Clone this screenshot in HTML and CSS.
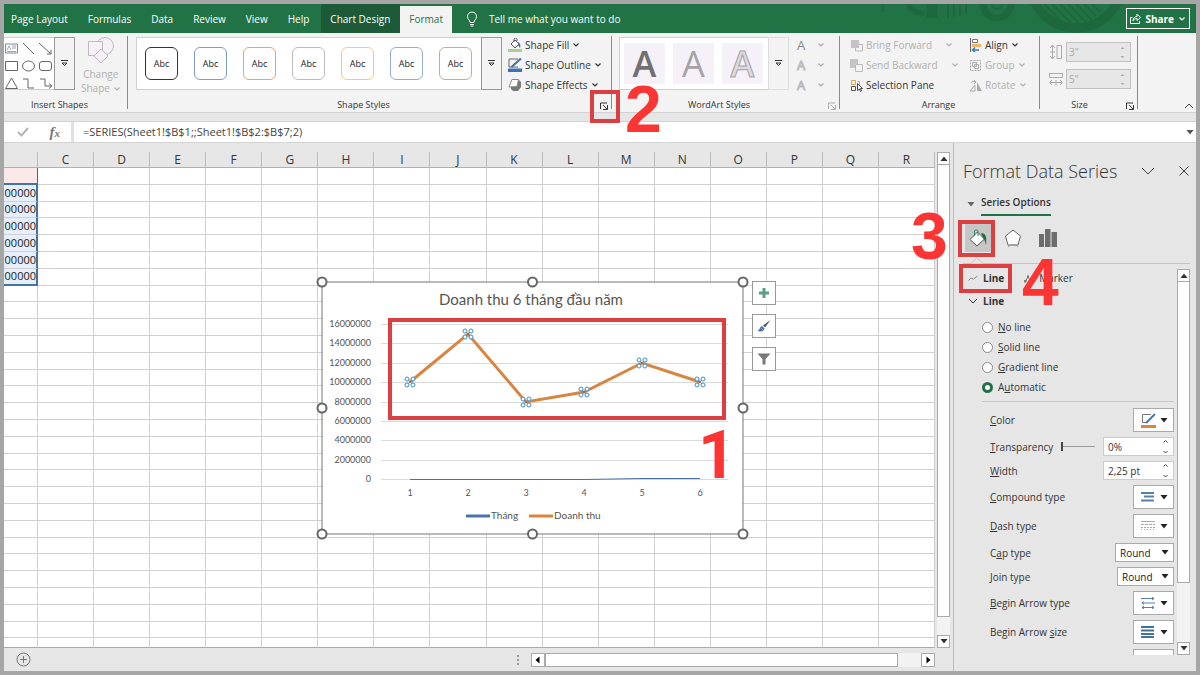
FILE: index.html
```
<!DOCTYPE html>
<html lang="en">
<head>
    <meta charset="UTF-8">
    <title>Format Data Series</title>
    <link rel="stylesheet" href="styles.css">
</head>
<body>
<!-- shared symbols -->
<svg class="defs" aria-hidden="true">
    <symbol id="chev" viewBox="0 0 8 6"><path d="M1.500 1.500 4 4l2.500-2.500" fill="none" stroke="currentColor" stroke-width="1.200"/></symbol>
    <symbol id="more" viewBox="0 0 9 9"><path d="M1 1.500h7M2 4l2.500 2.500L7 4z" fill="none" stroke="currentColor"/></symbol>
    <symbol id="launch" viewBox="0 0 9 9"><path d="M.5 7V1H7M3 3l4 4M7.500 3v4.500H3" fill="none" stroke="currentColor"/></symbol>
    <symbol id="tri" viewBox="0 0 8 5"><path d="M.5 0h7L4 4.500z" fill="currentColor"/></symbol>
</svg>
<div class="app">
    <header class="tabbar">
        <nav class="tabs">
            <a href="#">Page Layout</a>
            <a href="#">Formulas</a>
            <a href="#">Data</a>
            <a href="#">Review</a>
            <a href="#">View</a>
            <a href="#">Help</a>
        </nav>
        <a href="#" class="tab-context">Chart Design</a>
        <a href="#" class="tab-active">Format</a>
        <a href="#" class="tell-me">
            <svg width="12" height="16" viewBox="0 0 12 16" fill="none" stroke="#fff"><path d="M4 11.500C4 9 1.500 8.500 1.500 5.500a4.500 4.500 0 0 1 9 0C10.500 8.500 8 9 8 11.500zM4 13.500h4M4.500 15h3"/></svg>
            Tell me what you want to do
        </a>
        <svg class="deco" width="330" height="29" viewBox="0 0 330 29" fill="none" stroke="#1e683e">
            <path d="M11 0v8M76 0v14M82 0v13M88 0v12M94 0v10" stroke-width="2"/>
            <path d="M60 0v14" stroke-width="11"/>
            <path d="M36 0a15 15 0 0 0 16 9" stroke-width="5"/>
            <circle cx="125" cy="0" r="14" stroke-width="7"/>
            <circle cx="125" cy="0" r="5" stroke-width="2"/>
            <circle cx="204" cy="-22" r="46" stroke-width="9"/>
            <path d="M172 0l22 22M180 0l20 20M188 0l20 20M196 0l18 18M204 0l16 16M212 0l12 12M220 0l8 8" stroke-width="2"/>
        </svg>
        <button class="share">
            <svg width="11" height="11" viewBox="0 0 11 11" fill="none" stroke="#fff"><path d="M2.500 4.500h-2v6h9V8M3 8c0-3 2-4.500 4-4.500V1l3.500 3.500L7 7.500V5.500C5 5.500 4 6.500 3 8z"/></svg>
            Share
            <svg width="8" height="6"><use href="#chev"/></svg>
        </button>
    </header>

    <div class="ribbon">
        <section class="group g-insert">
            <div class="group-body">
                <div class="gallery shapes">
                    <svg width="50" height="52" viewBox="0 0 50 52" fill="none" stroke="#666">
                        <path d="M1.500 6h12v9h-12z" stroke="#888"/><path d="M3 12l2-4 2 4M8 8h4M8 10h4M3 13.500h9" stroke="#7d8fa8" stroke-width=".8"/>
                        <path d="M19 5l11 11M35 5l12 11M47 12v4h-4M1.500 23.500h12v9h-12zM7.500 40l-6 10.500h12zM19 41h5v9h6M36 41h5v7h6M45 45.500l3 2.500-3 2.500"/>
                        <ellipse cx="24.500" cy="28" rx="6" ry="5"/>
                        <rect x="35.500" y="23.500" width="12" height="9" rx="2.500"/>
                    </svg>
                </div>
                <button class="more"><svg width="9" height="9"><use href="#more"/></svg></button>
                <button class="change" disabled>
                    <svg width="28" height="27" viewBox="0 0 28 27" fill="#f6f0f7" stroke="#bfb8c2"><circle cx="18" cy="9" r="8.500"/><path d="M1.500 4.500h14v14h-14z"/><path d="M14 12l7 7-7 7-7-7z"/></svg>
                    <span>Change<br>Shape <svg width="8" height="6"><use href="#chev"/></svg></span>
                </button>
            </div>
            <div class="group-label">Insert Shapes</div>
        </section>

        <section class="group g-styles">
            <div class="group-body">
                <div class="gallery swatches">
                    <button class="sw sw-black">Abc</button>
                    <button class="sw sw-blue">Abc</button>
                    <button class="sw sw-orange">Abc</button>
                    <button class="sw sw-gray">Abc</button>
                    <button class="sw sw-gold">Abc</button>
                    <button class="sw sw-sky">Abc</button>
                    <button class="sw sw-green">Abc</button>
                </div>
                <button class="more"><svg width="9" height="9"><use href="#more"/></svg></button>
                <div class="menu">
                    <button><svg width="14" height="14" viewBox="0 0 14 14"><path d="M0 11h14v3H0z" fill="#a9cf8e"/><path d="M3 6l4-4 4 4-4 4z" fill="#fff" stroke="#555"/><path d="M6 4V1.500a1.500 1.500 0 0 1 3 0V3" fill="none" stroke="#555"/><path d="M10 4c2 1 3 3 2 6l-2-3z" fill="#41719c"/></svg>Shape Fill<svg width="8" height="6"><use href="#chev"/></svg></button>
                    <button><svg width="14" height="14" viewBox="0 0 14 14"><path d="M0 10.500h14V14H0z" fill="#3f6fb5"/><path d="M10 1H1v8h9" fill="none" stroke="#666"/><path d="M3.500 9L13 .5" stroke="#41719c" stroke-width="2"/></svg>Shape Outline<svg width="8" height="6"><use href="#chev"/></svg></button>
                    <button><svg width="14" height="14" viewBox="0 0 14 14"><path d="M3 8v3l2 2h5l3-4V4l-2-2z" fill="#777"/><path d="M4 1.500h6.500L9 8.500 1 9z" fill="#fff" stroke="#888"/></svg>Shape Effects<svg width="8" height="6"><use href="#chev"/></svg></button>
                </div>
            </div>
            <div class="group-label">Shape Styles</div>
            <button class="launcher"><svg width="9" height="9"><use href="#launch"/></svg></button>
            <span class="frame frame-2"></span>
            <span class="num num-2">2</span>
        </section>

        <section class="group g-wordart">
            <div class="group-body">
                <div class="gallery wordart">
                    <button class="wa wa-dark">A</button>
                    <button class="wa wa-light">A</button>
                    <button class="wa wa-line">A</button>
                </div>
                <button class="more more-soft"><svg width="9" height="9"><use href="#more"/></svg></button>
                <div class="menu menu-a">
                    <button class="solid" disabled>A<svg width="8" height="6"><use href="#chev"/></svg></button>
                    <button class="hollow" disabled>A<svg width="8" height="6"><use href="#chev"/></svg></button>
                    <button class="hollow" disabled>A<svg width="8" height="6"><use href="#chev"/></svg></button>
                </div>
            </div>
            <div class="group-label">WordArt Styles</div>
            <button class="launcher" disabled><svg width="9" height="9"><use href="#launch"/></svg></button>
        </section>

        <section class="group g-arrange">
            <div class="group-body">
                <div class="menu menu-order">
                    <button disabled><svg width="13" height="13" viewBox="0 0 13 13"><path d="M1 1h8v8H1z" fill="#c6c3c8"/><path d="M5.500 9v3h7V5.500H9" fill="none" stroke="#bbb"/></svg>Bring Forward<svg class="push" width="8" height="6"><use href="#chev"/></svg></button>
                    <button disabled><svg width="13" height="13" viewBox="0 0 13 13"><path d="M0 0h8v5H5v4H0z" fill="#c6c3c8"/><path d="M5.500 5.500h7v7h-7z" fill="none" stroke="#bbb"/></svg>Send Backward<svg class="push" width="8" height="6"><use href="#chev"/></svg></button>
                    <button><svg width="13" height="13" viewBox="0 0 13 13" fill="none"><path d="M1.500 1.500h4v4h-4zM7.500 2.500h2v3" stroke="#d9a441"/><path d="M1.500 7.500h4v4h-4z" stroke="#555"/><path d="M7.500 4.500v7l2-1.500 1 2.500 1-.5-1-2.500h2z" fill="#fff" stroke="#444"/></svg>Selection Pane</button>
                </div>
                <div class="menu">
                    <button><svg width="13" height="14" viewBox="0 0 13 14"><path d="M1.500 0v14" stroke="#666"/><path d="M3.500 1.500h5v3h-5z" fill="#fff" stroke="#777"/><path d="M3 6h9v3H3z" fill="#f0b26c"/><path d="M3 12h7M6 9.500L3.500 12 6 14" fill="none" stroke="#3d7ab8" stroke-width="1.500"/></svg>Align<svg width="8" height="6"><use href="#chev"/></svg></button>
                    <button disabled><svg width="13" height="13" viewBox="0 0 13 13" fill="none" stroke="#aaa"><path d="M1.500 1.500h10v10h-10z" stroke-dasharray="2 1"/><path d="M3.500 3.500h4v4h-4zM5.500 5.500h4v4h-4z"/></svg>Group<svg width="8" height="6"><use href="#chev"/></svg></button>
                    <button disabled><svg width="13" height="13" viewBox="0 0 13 13"><path d="M8 3v9h5z" fill="#aaa"/><path d="M6 6v6H1zM2 4c1-2 3-2 5-1M5 1l2 2-2 2" fill="none" stroke="#aaa"/></svg>Rotate<svg width="8" height="6"><use href="#chev"/></svg></button>
                </div>
            </div>
            <div class="group-label">Arrange</div>
        </section>

        <section class="group g-size">
            <div class="group-body sizes">
                <label>
                    <svg width="14" height="16" viewBox="0 0 14 16" fill="none" stroke="#aaa"><path d="M3.500 1v14M1 4l2.500-3L6 4M1 12l2.500 3L6 12M1 8h5M8 1.500h4.500v13H8z"/></svg>
                    <span class="spin spin-off"><input type="text" value='3"' disabled><svg width="7" height="15" viewBox="0 0 7 15"><path d="M1.500 4l2-2 2 2zM1.500 11l2 2 2-2z" fill="#aaa"/></svg></span>
                </label>
                <label>
                    <svg width="14" height="16" viewBox="0 0 14 16" fill="none" stroke="#aaa"><path d="M.5 2.500h13v4H.5zM1 11.500h12M3 9l-2.500 2.500L3 14M11 9l2.500 2.500L11 14M7 9v5"/></svg>
                    <span class="spin spin-off"><input type="text" value='5"' disabled><svg width="7" height="15" viewBox="0 0 7 15"><path d="M1.500 4l2-2 2 2zM1.500 11l2 2 2-2z" fill="#aaa"/></svg></span>
                </label>
            </div>
            <div class="group-label">Size</div>
            <button class="launcher"><svg width="9" height="9"><use href="#launch"/></svg></button>
        </section>
        <button class="collapse"><svg width="10" height="6" viewBox="0 0 10 6"><path d="M1 5l4-4 4 4" fill="none" stroke="#444"/></svg></button>
    </div>

    <div class="formula">
        <div class="formula-tools">
            <svg width="12" height="10" viewBox="0 0 12 10"><path d="M1 5l3.500 3.500L11 1" fill="none" stroke="#b5b5b5" stroke-width="2"/></svg>
            <span class="fx">f<small>x</small></span>
        </div>
        <input class="formula-text" type="text" aria-label="Formula" value="=SERIES(Sheet1!$B$1;;Sheet1!$B$2:$B$7;2)">
        <svg class="formula-drop" width="8" height="5"><use href="#tri"/></svg>
    </div>

    <main class="work">
        <div class="book">
            <div class="sheet-row">
                <div class="sheet">
                    <table class="grid">
                        <thead>
                            <tr><th class="col-b"></th><th>C</th><th>D</th><th>E</th><th>F</th><th>G</th><th>H</th><th>I</th><th>J</th><th>K</th><th>L</th><th>M</th><th>N</th><th>O</th><th>P</th><th>Q</th><th>R</th></tr>
                        </thead>
                        <tbody id="rows"></tbody>
                    </table>

                    <div class="chart">
                        <svg width="437" height="268" viewBox="-8 -8 437 268">
                            <rect x="0" y="0" width="421" height="252" fill="#fff" stroke="#777"/>
                            <text class="c-title" x="209" y="23">Doanh thu 6 tháng đầu năm</text>
                            <path d="M59 42.500h347M59 61.500h347M59 81.500h347M59 100.500h347M59 120.500h347M59 139.500h347M59 158.500h347M59 178.500h347M59 197.500h347" stroke="#d9d9d9"/>
                            <g class="c-y">
                                <text x="49" y="45">16000000</text>
                                <text x="49" y="64">14000000</text>
                                <text x="49" y="84">12000000</text>
                                <text x="49" y="103">10000000</text>
                                <text x="49" y="123">8000000</text>
                                <text x="49" y="142">6000000</text>
                                <text x="49" y="161">4000000</text>
                                <text x="49" y="181">2000000</text>
                                <text x="49" y="200">0</text>
                            </g>
                            <g class="c-x">
                                <text x="88" y="214">1</text>
                                <text x="146" y="214">2</text>
                                <text x="204" y="214">3</text>
                                <text x="262" y="214">4</text>
                                <text x="320" y="214">5</text>
                                <text x="378" y="214">6</text>
                            </g>
                            <path d="M88 197.500L262 197.500 320 196.500H378" fill="none" stroke="#4a6fae" stroke-width="1"/>
                            <path d="M88 100L146 52 204 120 262 110 320 81 378 100" fill="none" stroke="#d9853f" stroke-width="3"/>
                            <g id="marks"></g>
                            <path d="M144 234h24" stroke="#4a72b0" stroke-width="3"/>
                            <text x="169" y="237">Tháng</text>
                            <path d="M207 234h24" stroke="#d9853f" stroke-width="3"/>
                            <text x="232" y="237">Doanh thu</text>
                            <g fill="#fff" stroke="#666" stroke-width="2">
                                <circle cx="0" cy="0" r="4.500"/><circle cx="210.500" cy="0" r="4.500"/><circle cx="421" cy="0" r="4.500"/>
                                <circle cx="0" cy="126" r="4.500"/><circle cx="421" cy="126" r="4.500"/>
                                <circle cx="0" cy="252" r="4.500"/><circle cx="210.500" cy="252" r="4.500"/><circle cx="421" cy="252" r="4.500"/>
                            </g>
                            <rect x="68" y="38" width="334" height="98" fill="none" stroke="#db3f42" stroke-width="4"/>
                            <text class="c-num" x="376" y="196">1</text>
                        </svg>
                        <div class="chart-tools">
                            <button><svg width="12" height="12" viewBox="0 0 12 12"><path d="M6 1v10M1 6h10" stroke="#5b9f82" stroke-width="3"/></svg></button>
                            <button><svg width="14" height="14" viewBox="0 0 14 14"><path d="M13.500 1L8 8.500 6 6.500z" fill="#555"/><path d="M5 7l2.500 2.500C7 12 4 13 .5 12 3 11 2.500 8 5 7z" fill="#41719c"/><path d="M4.500 9.500l1 1" stroke="#fff"/></svg></button>
                            <button><svg width="14" height="12" viewBox="0 0 14 12"><path d="M.5.5h13L8.500 6v5.500h-3V6z" fill="#777"/></svg></button>
                        </div>
                    </div>
                </div>
                <div class="vscroll">
                    <button><svg class="up" width="8" height="5"><use href="#tri"/></svg></button>
                    <div class="thumb"></div>
                    <button><svg width="8" height="5"><use href="#tri"/></svg></button>
                </div>
            </div>
            <footer class="sheetbar">
                <button class="add"><svg width="15" height="15" viewBox="0 0 15 15" fill="none" stroke="#777"><circle cx="7.500" cy="7.500" r="6.500"/><path d="M7.500 4v7M4 7.500h7"/></svg></button>
                <span class="dots"></span>
                <div class="hscroll">
                    <button><svg width="5" height="8" viewBox="0 0 5 8"><path d="M4.500.5v7L.5 4z"/></svg></button>
                    <div class="hthumb"></div>
                    <button><svg width="5" height="8" viewBox="0 0 5 8"><path d="M.5.5v7l4-3.500z"/></svg></button>
                </div>
            </footer>
        </div>

        <aside class="pane">
            <div class="pane-head">
                <h2>Format Data Series</h2>
                <button><svg width="14" height="8" viewBox="0 0 14 8"><path d="M1 1l6 6 6-6" fill="none" stroke="#444"/></svg></button>
                <button><svg width="10" height="10" viewBox="0 0 10 10"><path d="M.5.5l9 9M9.500.5l-9 9" fill="none" stroke="#444"/></svg></button>
            </div>
            <div class="pane-options">
                <svg width="8" height="5"><use href="#tri"/></svg>
                <a href="#">Series Options</a>
            </div>
            <div class="pane-icons">
                <button class="on"><svg width="20" height="20" viewBox="0 0 20 20"><path d="M2 11.500L9.500 4l7 7L9 18z" fill="#fff" stroke="#555"/><path d="M6.500 8V3a2 2 0 0 1 3.500 0v5" fill="none" stroke="#2f8a5f"/><path d="M13 5c5 0 6 4 5 12-1-3-1-5-3-7z" fill="#217346"/></svg></button>
                <button><svg width="18" height="19" viewBox="0 0 18 19"><path d="M9 1l7.500 6-2.500 9H4L1.500 7z" fill="#fff" stroke="#666"/><path d="M4 18c1-3 9-3 10 0" fill="none" stroke="#999"/></svg></button>
                <button><svg width="18" height="18" viewBox="0 0 18 18"><path d="M0 5h5v13H0zM6 0h5.500v18H6zM12.500 3H18v15h-5.500z" fill="#6d6d6d"/></svg></button>
                <svg class="notch" width="12" height="7" viewBox="0 0 12 7"><path d="M0 6.500L6 .7l6 5.800" fill="#e6e6e6" stroke="#c4c4c4"/></svg>
            </div>
            <div class="pane-scroll">
                <div class="pane-body">
                    <div class="pane-tabs">
                        <button class="sel"><svg width="10" height="7" viewBox="0 0 10 7"><path d="M.5 5.500L3 3l2.500 1L9.500 1" fill="none" stroke="#888"/></svg>Line</button>
                        <button><svg width="10" height="9" viewBox="0 0 10 9"><path d="M1.500 7L4 3l2 3 3-4" fill="none" stroke="#777"/><path d="M0 6h2.500v2.500H0zM3 1.500h2V4H3z" fill="#777"/></svg>Marker</button>
                    </div>
                    <div class="sect"><svg width="10" height="6" viewBox="0 0 10 6"><path d="M1 1l4 4 4-4" fill="none" stroke="#333"/></svg>Line</div>
                    <div class="radios">
                        <label><input type="radio" name="line"><span><u>N</u>o line</span></label>
                        <label><input type="radio" name="line"><span><u>S</u>olid line</span></label>
                        <label><input type="radio" name="line"><span><u>G</u>radient line</span></label>
                        <label><input type="radio" name="line" checked><span>A<u>u</u>tomatic</span></label>
                    </div>
                    <div class="props">
                        <div class="prop">
                            <label for="color"><u>C</u>olor</label>
                            <button id="color" class="drop"><svg width="16" height="15" viewBox="0 0 16 15"><path d="M0 12h15v3H0z" fill="#d9843f"/><path d="M10 1.500H1.500v8H6" fill="none" stroke="#777"/><path d="M5 10L14 1" stroke="#3d7ab8" stroke-width="2"/></svg><svg width="8" height="5"><use href="#tri"/></svg></button>
                        </div>
                        <div class="prop">
                            <label for="transp"><u>T</u>ransparency</label>
                            <input type="range" class="slider" aria-label="Transparency slider" value="0">
                            <span class="spin"><input id="transp" type="text" value="0%"><svg width="7" height="15" viewBox="0 0 7 15"><path d="M1.500 3.500l2-2 2 2M1.500 12l2 2 2-2" fill="none" stroke="#444"/></svg></span>
                        </div>
                        <div class="prop">
                            <label for="width"><u>W</u>idth</label>
                            <span class="spin"><input id="width" type="text" value="2,25 pt"><svg width="7" height="15" viewBox="0 0 7 15"><path d="M1.500 3.500l2-2 2 2M1.500 12l2 2 2-2" fill="none" stroke="#444"/></svg></span>
                        </div>
                        <div class="prop">
                            <label for="compound"><u>C</u>ompound type</label>
                            <button id="compound" class="drop"><svg width="14" height="12" viewBox="0 0 14 12"><path d="M0 2h13M3 5.500h10M0 9.500h13" stroke="#5581a8" stroke-width="2"/></svg><svg width="8" height="5"><use href="#tri"/></svg></button>
                        </div>
                        <div class="prop">
                            <label for="dash"><u>D</u>ash type</label>
                            <button id="dash" class="drop"><svg width="14" height="12" viewBox="0 0 14 12" stroke="#aaa"><path d="M0 1.500h14"/><path d="M0 4.500h14" stroke-dasharray="3 1"/><path d="M0 7.500h14" stroke-dasharray="2 1"/><path d="M0 9.500h14" stroke-dasharray="1 2"/></svg><svg width="8" height="5"><use href="#tri"/></svg></button>
                        </div>
                        <div class="prop">
                            <label for="cap">C<u>a</u>p type</label>
                            <span class="pick"><select id="cap"><option>Round</option></select><svg width="8" height="5"><use href="#tri"/></svg></span>
                        </div>
                        <div class="prop">
                            <label for="join"><u>J</u>oin type</label>
                            <span class="pick pick-join"><select id="join"><option>Round</option></select><svg width="8" height="5"><use href="#tri"/></svg></span>
                        </div>
                        <div class="prop">
                            <label for="btype"><u>B</u>egin Arrow type</label>
                            <button id="btype" class="drop"><svg width="14" height="12" viewBox="0 0 14 12" fill="none" stroke="#5581a8"><path d="M0 1.500h13M11 0l2 1.500L11 3M1 6h13M3 4.500L1 6l2 1.500M1 10.500h12M3 9l-2 1.500L3 12M11 9l2 1.500-2 1.500"/></svg><svg width="8" height="5"><use href="#tri"/></svg></button>
                        </div>
                        <div class="prop">
                            <label for="bsize">Begin Arrow <u>s</u>ize</label>
                            <button id="bsize" class="drop"><svg width="14" height="12" viewBox="0 0 14 12"><path d="M0 1h13M0 4.500h13M0 8h13M0 11h13" stroke="#41719c" stroke-width="1.800"/></svg><svg width="8" height="5"><use href="#tri"/></svg></button>
                        </div>
                        <div class="prop">
                            <span></span>
                            <button class="drop" aria-label="End Arrow type"><svg width="14" height="12" viewBox="0 0 14 12" fill="none" stroke="#5581a8"><path d="M0 1.500h13M11 0l2 1.500L11 3"/></svg><svg width="8" height="5"><use href="#tri"/></svg></button>
                        </div>
                    </div>
                </div>
                <div class="vscroll pane-bar">
                    <button><svg class="up" width="8" height="5"><use href="#tri"/></svg></button>
                    <div class="thumb"></div>
                    <button><svg width="8" height="5"><use href="#tri"/></svg></button>
                </div>
            </div>
            <span class="frame frame-3"></span>
            <span class="num num-3">3</span>
            <span class="frame frame-4"></span>
            <span class="num num-4">4</span>
        </aside>
    </main>
</div>
<script src="sheet.js"></script>
</body>
</html>
```
FILE: styles.css
```
*{
    box-sizing: border-box;
}
body{
    margin: 0;
    padding: 4px;
    height: 100vh;
    background-color: #a6a6a6;
    color: #333;
    font: 10px/14px "Open Sans", "Noto Sans", sans-serif;
}
button, input, select{
    margin: 0;
    padding: 0;
    border: 0;
    background: none;
    color: inherit;
    font: inherit;
}
a{
    color: inherit;
    text-decoration: none;
}
svg{
    display: block;
    flex: none;
}
.defs{
    position: absolute;
    width: 0;
    height: 0;
}
.app{
    display: flex;
    flex-direction: column;
    height: 100%;
    overflow: hidden;
    background-color: #e6e6e6;
}

/* tab bar */
.tabbar{
    display: flex;
    align-items: stretch;
    height: 29px;
    flex: none;
    padding-right: 6px;
    background-color: #217346;
    color: #fff;
    line-height: 30px;
    white-space: nowrap;
}
.tabs{
    display: flex;
    gap: 20px;
    padding: 0 12px 0 7px;
}
.tab-context{
    padding: 0 10px 0 9px;
    background-color: #1c5a38;
}
.tab-active{
    margin-top: 2px;
    padding: 0 9px;
    background-color: #f3f3f3;
    color: #217346;
    line-height: 27px;
}
.tell-me{
    display: flex;
    align-items: center;
    gap: 11px;
    padding-left: 14px;
}
.deco{
    margin-left: auto;
    margin-right: -76px;
}
.share{
    display: flex;
    align-items: center;
    gap: 4px;
    position: relative;
    height: 21px;
    align-self: center;
    padding: 0 3px;
    border: 1px solid #fff;
    background-color: #217346;
    font-weight: 700;
}

/* ribbon */
.ribbon{
    display: flex;
    flex: none;
    height: 80px;
    padding: 3px 0;
    background-color: #f3f3f3;
    border-bottom: 1px solid #d2d2d2;
    position: relative;
    z-index: 2;
}
.group{
    display: flex;
    flex-direction: column;
    justify-content: space-between;
    position: relative;
    border-right: 1px solid #8a8a8a;
}
.group-body{
    display: flex;
    height: 54px;
    padding-top: 1px;
}
.group-label{
    padding-right: 20px;
    font-size: 9px;
    line-height: 8px;
    text-align: center;
    white-space: nowrap;
}
.gallery{
    display: flex;
    align-items: center;
    background-color: #fff;
    border: 1px solid #d0d0d0;
    border-right: 0;
}
.shapes{
    border-left: 0;
}
.more{
    display: flex;
    align-items: center;
    justify-content: center;
    width: 21px;
    border: 1px solid #999;
}
.more-soft{
    border-color: #ddd;
}
.launcher{
    position: absolute;
    right: 2px;
    bottom: -2px;
}
button:disabled{
    color: #b0b0b0;
}
.g-insert{
    width: 124px;
}
.g-insert .group-label,
.g-arrange .group-label{
    padding-right: 12px;
}
.change{
    display: flex;
    flex-direction: column;
    align-items: center;
    gap: 3px;
    margin-left: 6px;
    line-height: 14px;
}
.change span svg{
    display: inline-block;
}
.g-styles{
    width: 484px;
    padding-left: 8px;
    z-index: 1;
}
.swatches{
    gap: 16px;
    padding: 0 9px 0 8px;
}
.sw{
    width: 33px;
    height: 33px;
    border: 1px solid #333;
    border-radius: 6px;
    font-size: 9px;
    color: #222;
}
.sw-blue{ border-color: #7f9cc9; }
.sw-orange{ border-color: #dfa57e; }
.sw-gray{ border-color: #bbb; }
.sw-gold{ border-color: #ecd077; }
.sw-sky{ border-color: #8fb0d0; }
.sw-green{ border-color: #9cc585; }
.menu{
    display: flex;
    flex-direction: column;
    padding-left: 6px;
    margin-top: -2px;
}
.menu button{
    display: flex;
    align-items: center;
    gap: 3px;
    height: 20px;
    flex: none;
    white-space: nowrap;
}
.g-wordart{
    width: 228px;
    padding-left: 7px;
}
.wordart{
    gap: 8px;
    padding: 0 5px 0 4px;
}
.wa{
    width: 41px;
    height: 41px;
    background-color: #f6f1f8;
    font-size: 36px;
    line-height: 41px;
    font-weight: 600;
    color: #707070;
}
.wa-light{
    color: #a5a3a8;
    font-weight: 400;
}
.wa-line{
    color: #dcdadf;
    -webkit-text-stroke: 1px #a5a3a8;
}
.menu-a{
    padding-left: 8px;
}
.menu-a button{
    gap: 12px;
    font-size: 13px;
}
.menu-a .solid{
    color: #888;
}
.menu-a .hollow{
    color: #f3f3f3;
    -webkit-text-stroke: 1px #bbb;
}
.menu-a svg{
    color: #aaa;
}
.g-arrange{
    width: 200px;
    padding-left: 10px;
}
.menu-order{
    width: 108px;
    padding-left: 0;
}
.menu-order + .menu{
    padding-left: 11px;
}
.push{
    margin-left: 10px;
}
.g-size{
    width: 98px;
    padding: 0 7px 0 9px;
}
.sizes{
    flex-direction: column;
    gap: 7px;
    padding-top: 6px;
}
.sizes label{
    display: flex;
    align-items: center;
    gap: 3px;
}
.spin{
    display: flex;
    align-items: center;
    width: 71px;
    height: 19px;
    padding-right: 4px;
    background-color: #fff;
    border: 1px solid #ccc;
}
.spin input{
    flex: 1;
    min-width: 0;
    padding-left: 4px;
}
.spin-off{
    width: 65px;
    height: 20px;
    background-color: #e6e6e6;
    border-color: #c0c0c0;
    color: #aaa;
}
.spin-off input{
    padding-left: 2px;
}
.collapse{
    align-self: flex-end;
    margin-left: auto;
    padding: 0 2px 0 0;
}

/* formula bar */
.formula{
    display: flex;
    align-items: stretch;
    flex: none;
    height: 22px;
    margin-top: 8px;
    border: 1px solid #d4d4d4;
    border-width: 1px 0;
    background-color: #fff;
}
.formula-tools{
    display: flex;
    align-items: center;
    justify-content: space-between;
    width: 70px;
    padding: 0 11px 0 13px;
    border-right: 3px solid #e0e0e0;
}
.fx{
    font: italic bold 15px/18px "Liberation Serif", serif;
    color: #777;
}
.fx small{
    font-size: 11px;
}
.formula-text{
    flex: 1;
    padding-left: 9px;
    color: #444;
    font-size: 11px;
}
.formula-drop{
    align-self: center;
    margin-right: 2px;
    color: #555;
}

/* sheet */
.work{
    display: flex;
    flex: 1;
    min-height: 0;
}
.book{
    display: flex;
    flex-direction: column;
    flex: 1;
    min-width: 0;
    border-right: 1px solid #bbb;
}
.sheet-row{
    display: flex;
    flex: 1;
    min-height: 0;
}
.sheet{
    flex: 1;
    min-width: 0;
    position: relative;
    padding-top: 9px;
}
.grid{
    width: 100%;
    height: 100%;
    table-layout: fixed;
    border-collapse: separate;
    border-spacing: 0;
    background-color: #fff;
    font-size: 11px;
    line-height: 12px;
}
.grid th{
    height: 16px;
    padding: 0;
    background-color: #e6e6e6;
    border-right: 1px solid #bbb;
    border-bottom: 1px solid #b0b0b0;
    font-size: 12px;
    line-height: 15px;
    font-weight: 400;
}
.grid .col-b{
    width: 34px;
}
.grid td{
    height: 16px;
    padding: 0;
    border-right: 1px solid #d0d0d0;
    border-bottom: 1px solid #d0d0d0;
}
.grid .name{
    background-color: #fbe8e8;
    border-right-color: #b5383c;
    border-bottom: 2px solid #4472a8;
}
.grid .value{
    background-color: #e5eef9;
    border-right: 2px solid #4472a8;
    text-align: right;
    color: #222;
}
.grid .value-last{
    border-bottom: 2px solid #4472a8;
}
.grid .cut td{
    height: 9px;
    border-bottom-color: #aaa;
}

/* scroll bars */
.vscroll{
    display: flex;
    flex-direction: column;
    width: 13px;
    margin: 9px 3px 0 2px;
    background-color: #f2f2f2;
}
.vscroll button{
    display: flex;
    align-items: center;
    justify-content: center;
    height: 13px;
    background-color: #fff;
    border: 1px solid #aaa;
}
.up{
    transform: rotate(180deg);
}
.thumb{
    flex: 1;
    margin-bottom: 18px;
    background-color: #fff;
    border: 1px solid #aaa;
    border-top: 0;
}
.sheetbar{
    display: flex;
    align-items: center;
    height: 23px;
    flex: none;
    padding: 0 18px 0 12px;
}
.dots{
    width: 3px;
    height: 10px;
    margin-left: auto;
    border-left: 2px dotted #999;
}
.hscroll{
    display: flex;
    width: 44%;
    height: 14px;
    margin-left: 11px;
    background-color: #f2f2f2;
}
.hscroll button{
    display: flex;
    align-items: center;
    justify-content: center;
    width: 14px;
    border: 1px solid #aaa;
    background-color: #fff;
}
.hthumb{
    flex: 1;
    margin-right: 23px;
    background-color: #fff;
    border: 1px solid #aaa;
}

/* chart object */
.chart{
    position: absolute;
    left: 310px;
    top: 131px;
    display: flex;
    gap: 1px;
}
.chart text{
    font: 10px Lato, "Open Sans", sans-serif;
    fill: #555;
}
.chart .c-title{
    font-size: 15px;
    text-anchor: middle;
}
.chart .c-y text{
    font-size: 9px;
    text-anchor: end;
}
.chart .c-x text{
    font-size: 9px;
    text-anchor: middle;
}
.chart .c-num{
    font: bold 66px Roboto, sans-serif;
    fill: #fb3434;
}
.chart-tools{
    display: flex;
    flex-direction: column;
    gap: 9px;
    padding-top: 7px;
}
.chart-tools button{
    display: flex;
    align-items: center;
    justify-content: center;
    width: 24px;
    height: 24px;
    border: 1px solid #999;
    background-color: #fff;
}

/* format pane */
.pane{
    display: flex;
    flex-direction: column;
    width: 242px;
    padding: 16px 6px 16px 9px;
    position: relative;
}
.pane-head{
    display: flex;
    align-items: center;
    gap: 24px;
    height: 24px;
    padding-right: 3px;
}
.pane-head h2{
    flex: 1;
    margin: 0;
    font-size: 18px;
    line-height: 24px;
    font-weight: 300;
    color: #333;
    white-space: nowrap;
}
.pane-options{
    display: flex;
    align-items: center;
    gap: 6px;
    padding: 10px 0 0 4px;
    color: #666;
}
.pane-options a{
    padding: 2px 0 5px;
    border-bottom: 2px solid #217346;
    color: #333;
    font-weight: 600;
}
.pane-icons{
    display: flex;
    gap: 9px;
    height: 48px;
    padding-top: 8px;
    border-bottom: 1px solid #c4c4c4;
    position: relative;
}
.pane-icons button{
    display: flex;
    align-items: center;
    justify-content: center;
    width: 26px;
    height: 28px;
}
.pane-icons .on{
    margin-left: 2px;
    background-color: #c6c6c6;
}
.notch{
    position: absolute;
    left: 8px;
    bottom: -1px;
}
.pane-scroll{
    display: flex;
    flex: 1;
    min-height: 0;
    padding-top: 5px;
}
.pane-body{
    flex: 1;
    padding: 0 3px 0 5px;
    overflow: hidden;
}
.pane-tabs{
    display: flex;
    gap: 20px;
    height: 18px;
}
.pane-tabs button{
    display: flex;
    align-items: center;
    gap: 5px;
}
.pane-tabs .sel{
    font-weight: 700;
}
.sect{
    display: flex;
    align-items: center;
    gap: 5px;
    height: 28px;
    font-weight: 700;
}
.radios{
    margin-left: 14px;
    padding: 2px 0 4px;
    border-bottom: 1px solid #c8c8c8;
}
.radios label{
    display: flex;
    align-items: center;
    gap: 5px;
    height: 20px;
}
.radios input{
    appearance: none;
    width: 11px;
    height: 11px;
    border: 1px solid #888;
    border-radius: 50%;
    background-color: #fff;
}
.radios input:checked{
    border: 3px solid #217346;
}
.props{
    display: flex;
    flex-direction: column;
    gap: 5px;
    padding: 6px 0 0 22px;
}
.prop{
    display: flex;
    align-items: center;
    justify-content: space-between;
    flex: none;
    white-space: nowrap;
}
.drop{
    display: flex;
    align-items: center;
    justify-content: space-between;
    width: 41px;
    height: 24px;
    padding: 0 5px 0 7px;
    border: 1px solid #aaa;
    background-color: #fff;
    color: #222;
}
.slider{
    appearance: none;
    width: 34px;
    height: 10px;
    background: linear-gradient(#999, #999) center / 100% 1px no-repeat;
}
.slider::-webkit-slider-thumb{
    appearance: none;
    width: 2px;
    height: 9px;
    background-color: #444;
}
.pick{
    display: flex;
    align-items: center;
    width: 59px;
    height: 19px;
    padding-right: 4px;
    border: 1px solid #aaa;
    background-color: #fff;
    color: #222;
}
.pick-join{
    width: 57px;
}
.pick select{
    appearance: none;
    flex: 1;
    min-width: 0;
    padding-left: 4px;
}
.pane-bar{
    margin: 0;
}
.pane-bar .thumb{
    margin-bottom: 59px;
}

/* step markers */
.frame{
    position: absolute;
    border: 4px solid #db3f42;
}
.num{
    position: absolute;
    font: bold 66px/48px "Liberation Sans", sans-serif;
    color: #fb3434;
}
.frame-2{
    right: -9px;
    bottom: -14px;
    width: 30px;
    height: 33px;
}
.num-2{
    left: 497px;
    top: 49px;
}
.frame-3{
    left: 4px;
    top: 77px;
    width: 37px;
    height: 37px;
}
.num-3{
    left: -43px;
    top: 69px;
}
.frame-4{
    left: 5px;
    top: 121px;
    width: 53px;
    height: 29px;
}
.num-4{
    left: 68px;
    top: 115px;
}
```
FILE: sheet.js
```
// grid rows: row 1 holds the series name, rows 2-7 its values
var rows = document.getElementById("rows");
var html = "";
for (var r = 1; r <= 29; r++) {
    html += r == 29 ? '<tr class="cut">' : "<tr>";
    if (r == 1) {
        html += '<td class="name"></td>';
    } else if (r <= 7) {
        html += '<td class="value' + (r == 7 ? " value-last" : "") + '">00000</td>';
    } else {
        html += "<td></td>";
    }
    for (var c = 0; c < 16; c++) {
        html += "<td></td>";
    }
    html += "</tr>";
}
rows.innerHTML = html;

// selection dots around every point of the series
var points = [[88, 100], [146, 52], [204, 120], [262, 110], [320, 81], [378, 100]];
var marks = "";
points.forEach(function (p) {
    marks += '<path d="M' + (p[0] - 3) + " " + (p[1] - 3) + "l6 6m0-6l-6 6" + '" stroke="#777"/>';
    [[-3, -3], [3, -3], [-3, 3], [3, 3]].forEach(function (d) {
        marks += '<circle cx="' + (p[0] + d[0]) + '" cy="' + (p[1] + d[1]) + '" r="2" fill="#fff" stroke="#3f8fc4"/>';
    });
});
document.getElementById("marks").innerHTML = marks;
```
